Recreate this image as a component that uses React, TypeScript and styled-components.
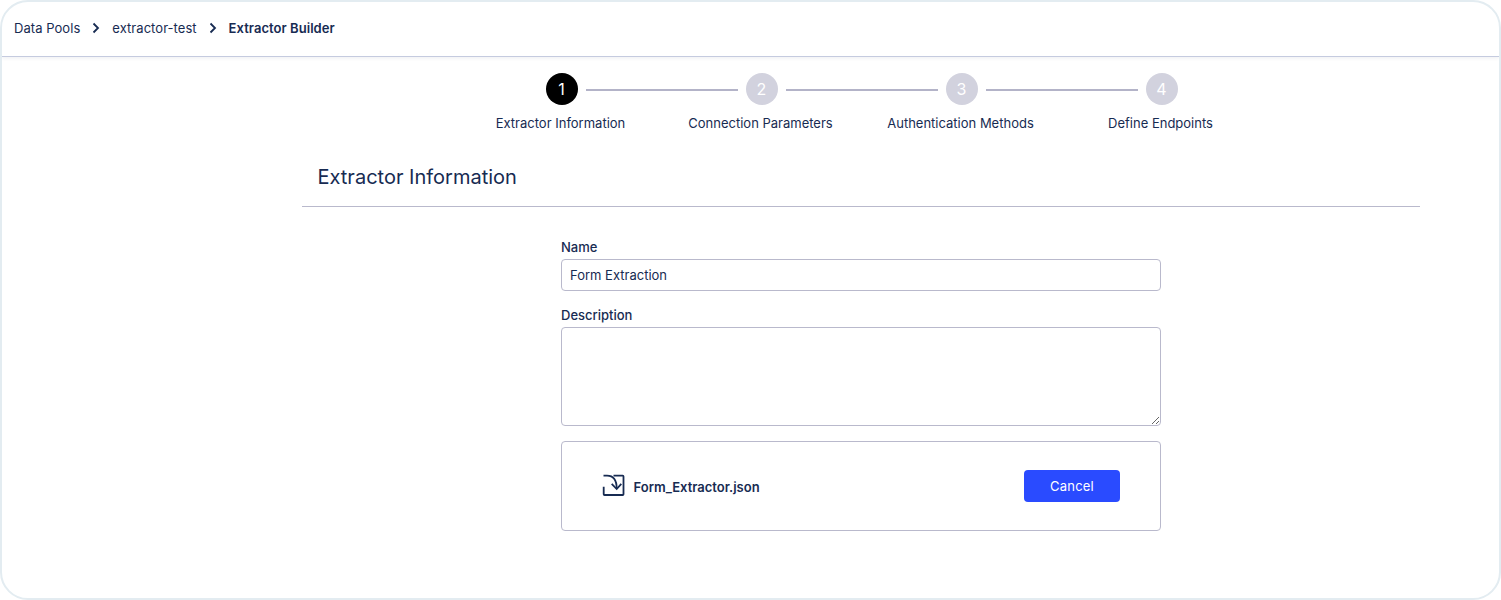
import React from "react";
import styled, { createGlobalStyle } from "styled-components";

const GlobalStyle = createGlobalStyle`
  html, body {
    margin: 0;
    padding: 0;
    background: #ffffff;
  }
  * {
    box-sizing: border-box;
  }
  body {
    font-family: Inter, "Liberation Sans", sans-serif;
    color: #172b52;
  }
`;

const Frame = styled.div`
  width: 1501px;
  height: 600px;
  border: 2px solid #e3ecf1;
  border-radius: 28px;
  overflow: hidden;
  background: #ffffff;
`;

const Header = styled.header`
  display: flex;
  align-items: center;
  gap: 10px;
  height: 55px;
  padding: 0 0 2px 12px;
  border-bottom: 1px solid #c5cbdf;
  box-shadow: 0 1px 4px rgba(20, 40, 75, 0.08);
  font-size: 13px;
  line-height: 16px;
  letter-spacing: 0.05px;
`;

const Crumb = styled.span<{ current?: boolean }>`
  font-weight: ${({ current }) => (current ? 600 : 400)};
`;

const Main = styled.main`
  width: 1118px;
  margin-left: 300px;
`;

const StepDots = styled.div`
  display: flex;
  align-items: center;
  justify-content: center;
  padding: 16px 0 0 2px;
`;

const Dot = styled.div<{ active?: boolean }>`
  display: flex;
  align-items: center;
  justify-content: center;
  width: 32px;
  height: 32px;
  padding-right: 1px;
  border-radius: 50%;
  background: ${({ active }) => (active ? "#000000" : "#d2d2de")};
  color: #ffffff;
  font-size: 16px;
`;

const Connector = styled.div`
  width: 152px;
  height: 2px;
  margin: 1px 8px 0;
  background: #b3b3c8;
`;

const StepLabels = styled.div`
  display: grid;
  grid-template-columns: repeat(4, 200px);
  justify-content: center;
  margin-top: 10px;
  padding-right: 1px;
  font-size: 13px;
  line-height: 16px;
  text-align: center;
`;

const Title = styled.h1`
  margin: 0;
  height: 76px;
  padding: 34px 0 0 15.5px;
  border-bottom: 1px solid #b9b9cc;
  font-size: 20px;
  font-weight: 400;
  line-height: 24px;
`;

const Form = styled.form`
  display: flex;
  flex-direction: column;
  width: 600px;
  margin: 32px auto 0;
`;

const Label = styled.label`
  margin-bottom: 4px;
  font-size: 13px;
  font-weight: 500;
  line-height: 16px;
`;

const Input = styled.input`
  height: 32px;
  margin-bottom: 16px;
  padding: 0 8px;
  border: 1px solid #b9b9cc;
  border-radius: 4px;
  outline: none;
  background: #ffffff;
  color: #172b52;
  font-family: inherit;
  font-size: 13px;
`;

const TextArea = styled.textarea`
  display: block;
  height: 99px;
  margin-bottom: 15px;
  padding: 8px;
  border: 1px solid #b9b9cc;
  border-radius: 4px;
  outline: none;
  font-family: inherit;
  font-size: 13px;
`;

const FileBox = styled.div`
  display: flex;
  align-items: center;
  justify-content: space-between;
  height: 90px;
  padding: 0 40px;
  border: 1px solid #b9b9cc;
  border-radius: 4px;
`;

const FileInfo = styled.div`
  display: flex;
  align-items: center;
  gap: 7.5px;
  font-size: 13px;
  font-weight: 600;
  line-height: 16px;
`;

const FileName = styled.span`
  padding-top: 2px;
`;

const CancelButton = styled.button`
  width: 96px;
  height: 32px;
  border: none;
  border-radius: 4px;
  background: #2a4bff;
  color: #ffffff;
  font-family: inherit;
  font-size: 13px;
  letter-spacing: 0.2px;
`;

const Chevron = () => (
  <svg width="12" height="12" viewBox="0 0 12 12" fill="none" stroke="#172b52" strokeWidth="1.8">
    <path d="M3.5 1.5 8 6l-4.5 4.5" />
  </svg>
);

const ImportIcon = () => (
  <svg width="24" height="24" viewBox="0 0 24 24" fill="none" stroke="#172b52" strokeWidth="1.8">
    <path d="M1.7 12.7v7.5c0 .5.3.8.8.8h18.2c.5 0 .8-.3.8-.8V2.5c0-.5-.3-.8-.8-.8h-9.2" />
    <path d="M1.5 1.7H5c6 0 9.7 4.5 9.7 13" />
    <path d="M9.7 9.8l5 5.2 4.6-5.2" />
  </svg>
);

const steps = ["Extractor Information", "Connection Parameters", "Authentication Methods", "Define Endpoints"];

export default function App() {
  return (
    <Frame>
      <GlobalStyle />
      <Header>
        <Crumb>Data Pools</Crumb>
        <Chevron />
        <Crumb>extractor-test</Crumb>
        <Chevron />
        <Crumb current>Extractor Builder</Crumb>
      </Header>
      <Main>
        <StepDots>
          {steps.map((step, i) => (
            <React.Fragment key={step}>
              <Dot active={i === 0}>{i + 1}</Dot>
              {i < steps.length - 1 && <Connector />}
            </React.Fragment>
          ))}
        </StepDots>
        <StepLabels>
          {steps.map((step) => (
            <span key={step}>{step}</span>
          ))}
        </StepLabels>
        <Title>Extractor Information</Title>
        <Form>
          <Label>Name</Label>
          <Input defaultValue="Form Extraction" />
          <Label>Description</Label>
          <TextArea />
          <FileBox>
            <FileInfo>
              <ImportIcon />
              <FileName>Form_Extractor.json</FileName>
            </FileInfo>
            <CancelButton type="button">Cancel</CancelButton>
          </FileBox>
        </Form>
      </Main>
    </Frame>
  );
}
